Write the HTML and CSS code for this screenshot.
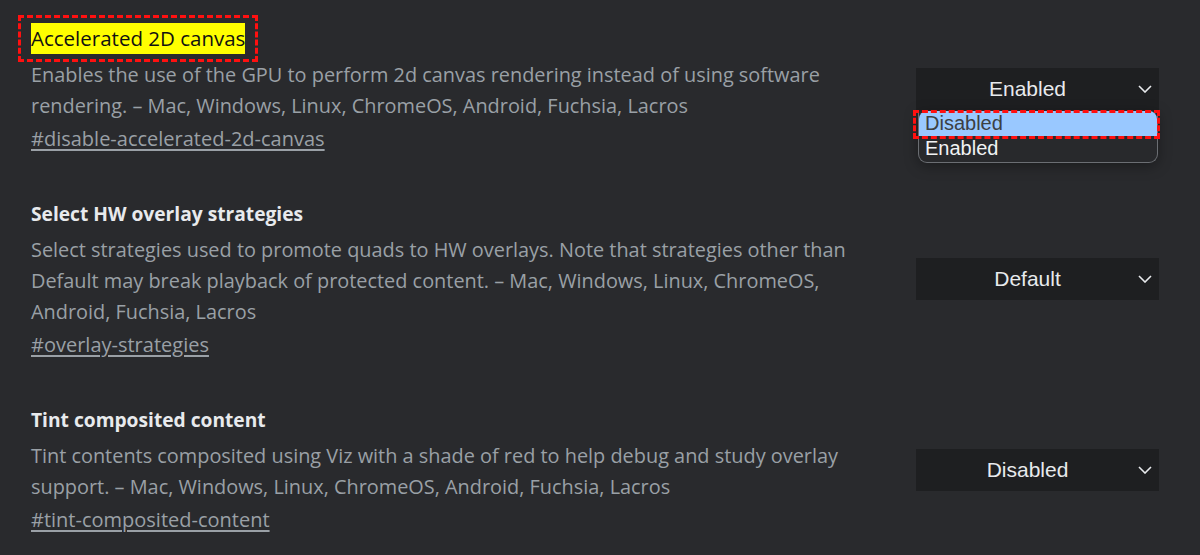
FILE: index.html
```html
<!DOCTYPE html>
<html lang="en">
<head>
<meta charset="utf-8">
<title>Flags</title>
<link rel="stylesheet" href="styles.css">
</head>
<body>
<main class="page">
  <section class="exp">
    <div class="info">
      <h2 class="title"><mark class="hit">Accelerated 2D canvas</mark></h2>
      <p class="desc">Enables the use of the GPU to perform 2d canvas rendering instead of using software rendering. – Mac, Windows, Linux, ChromeOS, Android, Fuchsia, Lacros</p>
      <a class="link" href="#disable-accelerated-2d-canvas">#disable-accelerated-2d-canvas</a>
    </div>
    <div class="ctrl">
      <div class="select"><span class="val">Enabled</span><svg class="chev" width="14" height="8" viewBox="0 0 14 8"><polyline points="1,1 7,7 13,1" fill="none" stroke="#e8eaed" stroke-width="1.6"/></svg></div>
      <ul class="menu">
        <li class="opt sel">Disabled</li>
        <li class="opt">Enabled</li>
      </ul>
    </div>
  </section>

  <section class="exp">
    <div class="info">
      <h2 class="title">Select HW overlay strategies</h2>
      <p class="desc">Select strategies used to promote quads to HW overlays. Note that strategies other than Default may break playback of protected content. – Mac, Windows, Linux, ChromeOS, Android, Fuchsia, Lacros</p>
      <a class="link" href="#overlay-strategies">#overlay-strategies</a>
    </div>
    <div class="ctrl">
      <div class="select"><span class="val">Default</span><svg class="chev" width="14" height="8" viewBox="0 0 14 8"><polyline points="1,1 7,7 13,1" fill="none" stroke="#e8eaed" stroke-width="1.6"/></svg></div>
    </div>
  </section>

  <section class="exp">
    <div class="info">
      <h2 class="title">Tint composited content</h2>
      <p class="desc">Tint contents composited using Viz with a shade of red to help debug and study overlay support. – Mac, Windows, Linux, ChromeOS, Android, Fuchsia, Lacros</p>
      <a class="link" href="#tint-composited-content">#tint-composited-content</a>
    </div>
    <div class="ctrl">
      <div class="select"><span class="val">Disabled</span><svg class="chev" width="14" height="8" viewBox="0 0 14 8"><polyline points="1,1 7,7 13,1" fill="none" stroke="#e8eaed" stroke-width="1.6"/></svg></div>
    </div>
  </section>
</main>
</body>
</html>
```

FILE: styles.css
```css
* { box-sizing: border-box; }
html, body {
  margin: 0;
  padding: 0;
  background: #292a2d;
  height: 100%;
  overflow: hidden;
}
.page {
  padding: 23px 41px 0 31px;
  display: flex;
  flex-direction: column;
  gap: 44px;
  font-family: "Open Sans", "Noto Sans", sans-serif;
}
.exp {
  display: flex;
  align-items: center;
  justify-content: space-between;
}
.info {
  width: 840px;
  display: flex;
  flex-direction: column;
  align-items: flex-start;
}
.title {
  margin: 0;
  font-size: 19.2px;
  line-height: 31px;
  font-weight: 700;
  color: #e8eaed;
}
.hit {
  position: relative;
  display: inline-block;
  background: #ffff00;
  color: #111;
  font-weight: 400;
  font-size: 20.5px;
  line-height: 31px;
}
.hit::after {
  content: "";
  position: absolute;
  inset: -8px -13px;
  border: 3px dashed #ff1010;
}
.desc {
  margin: 5px 0 0;
  font-size: 19.9px;
  line-height: 31px;
  color: #9aa0a6;
}
.link {
  margin-top: 3px;
  font-size: 20px;
  line-height: 30px;
  color: #9aa0a6;
  text-decoration: underline;
  text-underline-offset: 3px;
}
.ctrl {
  position: relative;
  flex-shrink: 0;
}
.select {
  width: 243px;
  height: 42px;
  background: #1e1f21;
  display: flex;
  align-items: center;
  justify-content: center;
  padding: 0 20px 0 0;
  font-family: "Liberation Sans", Arial, sans-serif;
  font-size: 21px;
  color: #e8eaed;
  position: relative;
}
.chev {
  position: absolute;
  right: 7px;
  top: 17px;
}
.menu {
  position: absolute;
  top: 43px;
  left: 2px;
  width: 240px;
  margin: 0;
  padding: 0 0 1px;
  list-style: none;
  background: #28292c;
  border: 1px solid #6b6e73;
  border-top: 0;
  border-radius: 0 0 9px 9px;
  box-shadow: 0 3px 14px rgba(0, 0, 0, 0.35);
  font-family: "Liberation Sans", Arial, sans-serif;
  font-size: 20px;
}
.opt {
  line-height: 25px;
  padding-left: 6px;
  color: #f1f3f4;
}
.opt.sel {
  position: relative;
  background: #99c8ff;
  color: #3c4043;
  border-radius: 8px 8px 0 0;
}
.opt.sel::after {
  content: "";
  position: absolute;
  left: -6px;
  right: -3px;
  top: -1px;
  bottom: -3px;
  border: 3px dashed #ff1010;
}
```
